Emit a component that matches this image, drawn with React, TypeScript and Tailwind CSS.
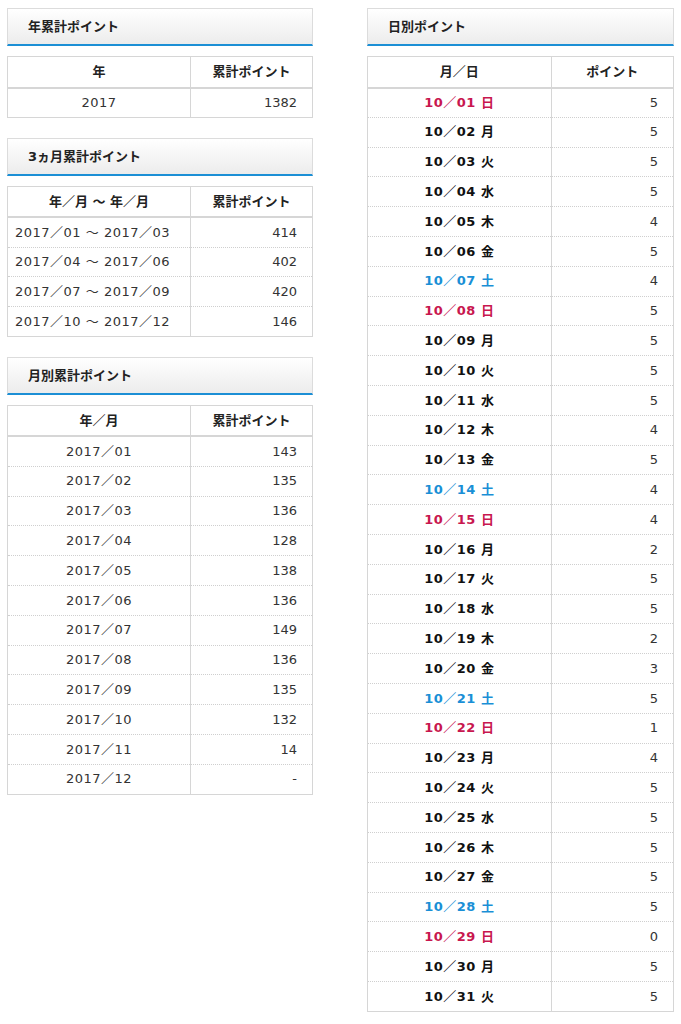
const font = { fontFamily: '"DejaVu Sans", "Noto Sans CJK JP", sans-serif' };

function Title({ text }: { text: string }) {
  return (
    <div className="h-[38px] border border-[#dcdcdc] border-b-2 border-b-[#1c8fd5] bg-gradient-to-b from-white to-[#ececec] flex items-center pl-[20px] text-[13px] font-bold text-[#222]">
      {text}
    </div>
  );
}

function Table({
  head,
  rows,
  leftAlign,
  bold,
}: {
  head: [string, string];
  rows: { a: string; b: string; color?: string }[];
  leftAlign?: boolean;
  bold?: boolean;
}) {
  return (
    <table className="w-full border-collapse border border-[#d6d6d6] text-[13px] text-[#333] mt-[10px]">
      <thead>
        <tr className="h-[31px] border-b-2 border-[#d6d6d6]">
          <th className="w-[60%] border-r border-[#d6d6d6] font-bold text-[#222]">{head[0]}</th>
          <th className="font-bold text-[#222]">{head[1]}</th>
        </tr>
      </thead>
      <tbody>
        {rows.map((r, i) => (
          <tr key={i} className="h-[29.8px] border-b border-dotted border-[#cfcfcf] last:border-b-0">
            <td
              className={`border-r border-[#d6d6d6] ${leftAlign ? "text-left pl-[7px]" : "text-center"} ${bold ? "font-bold tracking-[0.5px]" : "tracking-[0.5px]"}`}
              style={{ color: r.color }}
            >
              {r.a}
            </td>
            <td className="text-right pr-[15px]">{r.b}</td>
          </tr>
        ))}
      </tbody>
    </table>
  );
}

const months = ["143", "135", "136", "128", "138", "136", "149", "136", "135", "132", "14", "-"];
const weekdays = ["日", "月", "火", "水", "木", "金", "土"];
const daily = "5555454555545442552351455555055".split("");

export default function App() {
  return (
    <div className="flex gap-[54px] pl-[7px] pt-[8px] bg-white w-[681px] min-h-[1024px]" style={font}>
      <div className="w-[306px] flex flex-col">
        <Title text="年累計ポイント" />
        <Table head={["年", "累計ポイント"]} rows={[{ a: "2017", b: "1382" }]} />
        <div className="h-[20px]" />
        <Title text="3ヵ月累計ポイント" />
        <Table
          head={["年／月 ～ 年／月", "累計ポイント"]}
          leftAlign
          rows={[
            { a: "2017／01 ～ 2017／03", b: "414" },
            { a: "2017／04 ～ 2017／06", b: "402" },
            { a: "2017／07 ～ 2017／09", b: "420" },
            { a: "2017／10 ～ 2017／12", b: "146" },
          ]}
        />
        <div className="h-[20px]" />
        <Title text="月別累計ポイント" />
        <Table
          head={["年／月", "累計ポイント"]}
          rows={months.map((b, i) => ({ a: `2017／${String(i + 1).padStart(2, "0")}`, b }))}
        />
      </div>
      <div className="w-[307px] flex flex-col">
        <Title text="日別ポイント" />
        <Table
          head={["月／日", "ポイント"]}
          bold
          rows={daily.map((b, i) => {
            const w = i % 7;
            return {
              a: `10／${String(i + 1).padStart(2, "0")} ${weekdays[w]}`,
              b,
              color: w === 0 ? "#c8174f" : w === 6 ? "#1a8fd6" : "#111",
            };
          })}
        />
      </div>
    </div>
  );
}
